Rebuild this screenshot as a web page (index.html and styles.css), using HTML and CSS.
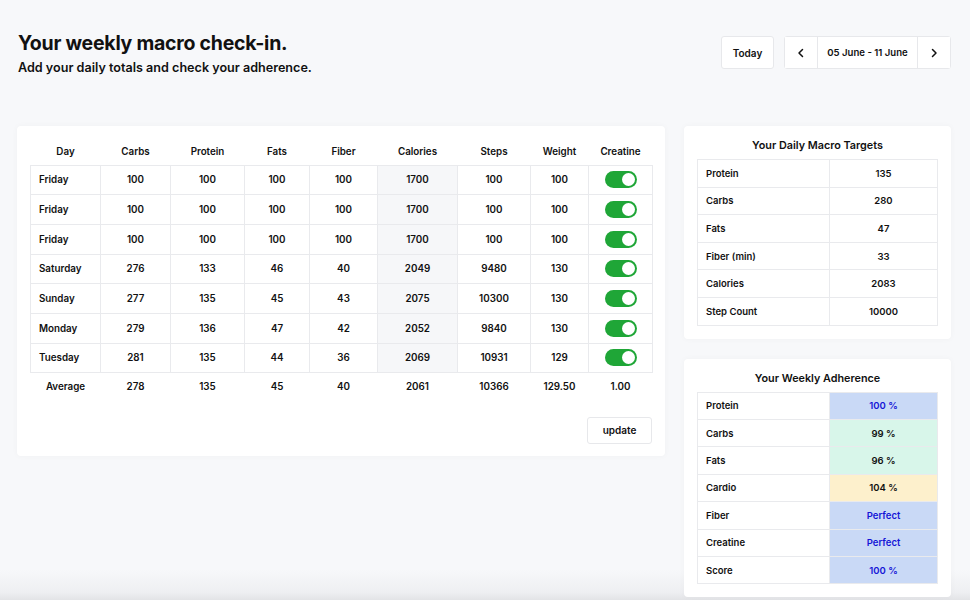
FILE: index.html
```html
<!DOCTYPE html>
<html>
<head>
<meta charset="utf-8">
<link rel="stylesheet" href="styles.css">
</head>
<body>
<div class="page">
  <header class="top">
    <div class="heading">
      <h1 class="title">Your weekly macro check-in.</h1>
      <p class="subtitle">Add your daily totals and check your adherence.</p>
    </div>
    <div class="controls">
      <button class="btn today">Today</button>
      <div class="range">
        <button class="range-btn arrow"><svg width="10" height="10" viewBox="0 0 10 10"><path d="M6.5 1.5 3 5l3.5 3.5" fill="none" stroke="#111" stroke-width="1.5" stroke-linecap="round" stroke-linejoin="round"/></svg></button>
        <div class="range-label">05 June - 11 June</div>
        <button class="range-btn arrow"><svg width="10" height="10" viewBox="0 0 10 10"><path d="M3.5 1.5 7 5 3.5 8.5" fill="none" stroke="#111" stroke-width="1.5" stroke-linecap="round" stroke-linejoin="round"/></svg></button>
      </div>
    </div>
  </header>

  <main class="content">
    <section class="card main-card">
      <table class="log">
        <thead>
          <tr><th>Day</th><th>Carbs</th><th>Protein</th><th>Fats</th><th>Fiber</th><th>Calories</th><th>Steps</th><th>Weight</th><th>Creatine</th></tr>
        </thead>
        <tbody>
          <tr><td class="day">Friday</td><td>100</td><td>100</td><td>100</td><td>100</td><td class="cal">1700</td><td>100</td><td>100</td><td><span class="toggle"></span></td></tr>
          <tr><td class="day">Friday</td><td>100</td><td>100</td><td>100</td><td>100</td><td class="cal">1700</td><td>100</td><td>100</td><td><span class="toggle"></span></td></tr>
          <tr><td class="day">Friday</td><td>100</td><td>100</td><td>100</td><td>100</td><td class="cal">1700</td><td>100</td><td>100</td><td><span class="toggle"></span></td></tr>
          <tr><td class="day">Saturday</td><td>276</td><td>133</td><td>46</td><td>40</td><td class="cal">2049</td><td>9480</td><td>130</td><td><span class="toggle"></span></td></tr>
          <tr><td class="day">Sunday</td><td>277</td><td>135</td><td>45</td><td>43</td><td class="cal">2075</td><td>10300</td><td>130</td><td><span class="toggle"></span></td></tr>
          <tr><td class="day">Monday</td><td>279</td><td>136</td><td>47</td><td>42</td><td class="cal">2052</td><td>9840</td><td>130</td><td><span class="toggle"></span></td></tr>
          <tr><td class="day">Tuesday</td><td>281</td><td>135</td><td>44</td><td>36</td><td class="cal">2069</td><td>10931</td><td>129</td><td><span class="toggle"></span></td></tr>
        </tbody>
        <tfoot>
          <tr><td>Average</td><td>278</td><td>135</td><td>45</td><td>40</td><td>2061</td><td>10366</td><td>129.50</td><td>1.00</td></tr>
        </tfoot>
      </table>
      <div class="actions"><button class="btn update">update</button></div>
    </section>

    <aside class="side">
      <section class="card side-card">
        <h2 class="card-title">Your Daily Macro Targets</h2>
        <table class="kv">
          <tr><td>Protein</td><td>135</td></tr>
          <tr><td>Carbs</td><td>280</td></tr>
          <tr><td>Fats</td><td>47</td></tr>
          <tr><td>Fiber (min)</td><td>33</td></tr>
          <tr><td>Calories</td><td>2083</td></tr>
          <tr><td>Step Count</td><td>10000</td></tr>
        </table>
      </section>
      <section class="card side-card">
        <h2 class="card-title">Your Weekly Adherence</h2>
        <table class="kv adherence">
          <tr><td>Protein</td><td class="blue">100 %</td></tr>
          <tr><td>Carbs</td><td class="green">99 %</td></tr>
          <tr><td>Fats</td><td class="green">96 %</td></tr>
          <tr><td>Cardio</td><td class="yellow">104 %</td></tr>
          <tr><td>Fiber</td><td class="blue">Perfect</td></tr>
          <tr><td>Creatine</td><td class="blue">Perfect</td></tr>
          <tr><td>Score</td><td class="blue">100 %</td></tr>
        </table>
      </section>
    </aside>
  </main>
</div>
</body>
</html>
```

FILE: styles.css
```css
* { box-sizing: border-box; }
html, body { margin: 0; padding: 0; }
body {
  font-family: Inter, "Noto Sans", sans-serif;
  color: #111;
  background: #f7f8fa;
  height: 600px;
  overflow: hidden;
}
.page {
  height: 600px;
  background: linear-gradient(to bottom, #f7f8fa 0, #f7f8fa 570px, #eeeff2 592px, #e2e3e6 600px);
}
.top {
  display: flex;
  justify-content: space-between;
  align-items: flex-start;
  padding: 31px 19px 0 18px;
  height: 126px;
}
.title {
  margin: 0;
  font-size: 19.5px;
  font-weight: 700;
  letter-spacing: -0.25px;
  line-height: 24px;
}
.subtitle {
  margin: 5px 0 0;
  font-size: 12.6px;
  font-weight: 600;
  line-height: 16px;
}
.controls {
  display: flex;
  gap: 10px;
  margin-top: 5px;
}
.btn {
  font-family: inherit;
  background: #fff;
  border: 1px solid #e7e8eb;
  border-radius: 3px;
  font-size: 10px;
  font-weight: 600;
  color: #111;
  cursor: pointer;
}
.today {
  width: 53px;
  height: 33px;
}
.range {
  display: flex;
  height: 33px;
  background: #fff;
  border: 1px solid #e7e8eb;
  border-radius: 3px;
}
.range-btn {
  width: 32px;
  background: #fff;
  border: 0;
  display: flex;
  align-items: center;
  justify-content: center;
  padding: 0;
}
.range-label {
  width: 101px;
  border-left: 1px solid #e7e8eb;
  border-right: 1px solid #e7e8eb;
  display: flex;
  align-items: center;
  justify-content: center;
  font-size: 9.6px;
  font-weight: 600;
}
.content {
  display: grid;
  grid-template-columns: 648px 267px;
  gap: 19px;
  padding: 0 19px 0 17px;
  align-items: start;
}
.card {
  background: #fff;
  border-radius: 4px;
  box-shadow: 0 0 6px rgba(0,0,0,0.035);
}
.main-card {
  padding: 13px 13px 12px;
}
.log {
  width: 622px;
  border-collapse: collapse;
  table-layout: fixed;
  font-size: 9.8px;
  font-weight: 600;
}
.log th {
  font-weight: 600;
  height: 26px;
  padding: 0;
  text-align: center;
}
.log th:first-child { width: 70px; }
.log th:nth-child(2) { width: 70px; }
.log th:nth-child(3) { width: 74px; }
.log th:nth-child(4) { width: 65px; }
.log th:nth-child(5) { width: 68px; }
.log th:nth-child(6) { width: 80px; }
.log th:nth-child(7) { width: 73px; }
.log th:nth-child(8) { width: 58px; }
.log th:nth-child(9) { width: 64px; }
.log tbody td {
  border: 1px solid #e9eaed;
  height: 29.7px;
  padding: 0;
  text-align: center;
}
.log tbody td.day {
  text-align: left;
  padding-left: 8px;
}
.log td.cal { background: #f6f7f9; }
.log tfoot td {
  height: 26px;
  padding: 0;
  text-align: center;
}
.toggle {
  display: inline-block;
  position: relative;
  width: 32px;
  height: 17px;
  border-radius: 9px;
  background: #1fa637;
  vertical-align: middle;
}
.toggle::after {
  content: "";
  position: absolute;
  right: 2px;
  top: 2px;
  width: 13px;
  height: 13px;
  border-radius: 50%;
  background: #fff;
}
.actions {
  display: flex;
  justify-content: flex-end;
  margin-top: 18px;
}
.update {
  width: 65px;
  height: 27px;
}
.side {
  display: flex;
  flex-direction: column;
  gap: 20px;
}
.side-card {
  padding: 12px 13px 13px;
}
.card-title {
  margin: 0 0 5px;
  font-size: 10.8px;
  font-weight: 600;
  text-align: center;
  line-height: 16px;
}
.kv {
  width: 241px;
  border-collapse: collapse;
  table-layout: fixed;
  font-size: 9.5px;
  font-weight: 600;
}
.kv td {
  border: 1px solid #e9eaed;
  height: 27.6px;
  padding: 0;
}
.kv td:first-child {
  width: 132px;
  padding-left: 8px;
}
.kv td:last-child {
  text-align: center;
}
.adherence td { height: 27.4px; }
.adherence td.blue { background: #c9d9f6; color: #1515d6; }
.adherence td.green { background: #d8f6ea; }
.adherence td.yellow { background: #fdf0cc; }
```
